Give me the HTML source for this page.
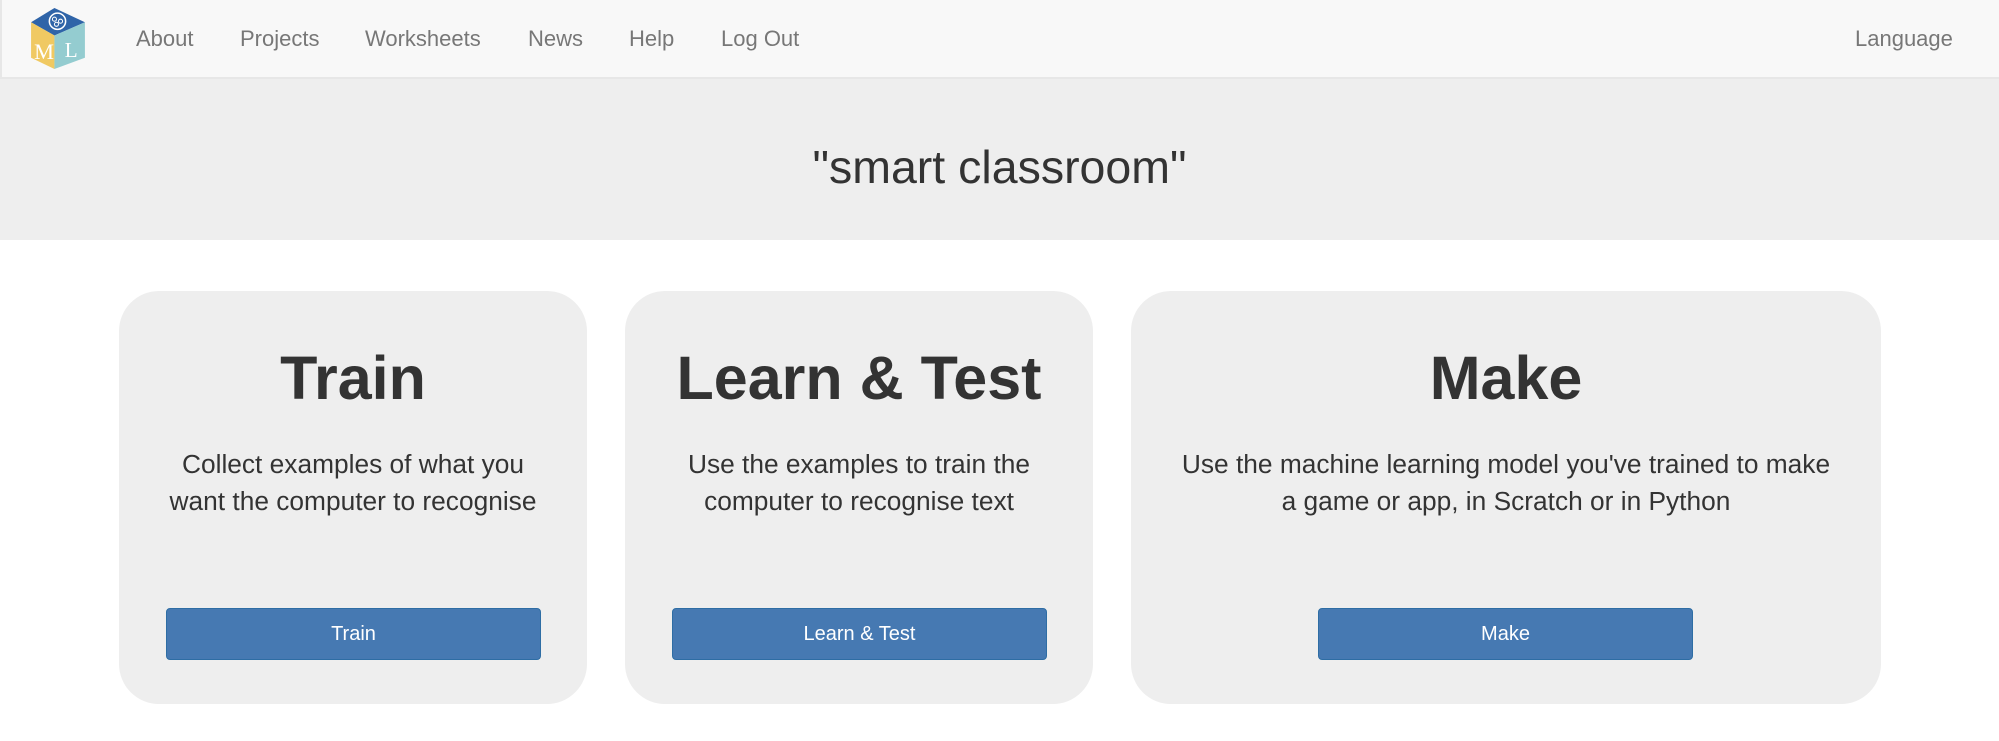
<!DOCTYPE html>
<html><head><meta charset="utf-8"><style>
*{margin:0;padding:0;box-sizing:border-box}
body{width:1999px;height:741px;background:#fff;font-family:"Liberation Sans",Arial,sans-serif;position:relative;overflow:hidden;color:#333}
.nav{position:absolute;left:0;top:0;width:1999px;height:79px;background:#f8f8f8;border-bottom:2px solid #e7e7e7;border-left:2px solid #e7e7e7}
.nav a{position:absolute;top:26px;font-size:22px;color:#777;text-decoration:none;line-height:26px}
.band{position:absolute;left:0;top:79px;width:1999px;height:161px;background:#eee}
.band h1{position:absolute;left:0;width:100%;top:60px;text-align:center;font-weight:normal;font-size:46.5px;line-height:56px}
.card{position:absolute;top:291px;height:413px;background:#eee;border-radius:40px;text-align:center}
.card h2{position:absolute;left:0;width:100%;top:52px;font-size:61px;font-weight:bold;line-height:70px}
.card p{position:absolute;left:0;width:100%;top:155px;font-size:26.3px;line-height:37px}
.btn{position:absolute;top:317px;height:52px;width:375px;background:#4679b2;border:1px solid #2e6da4;border-radius:4px;color:#fff;font-size:20px;line-height:50px}
</style></head><body>
<div class="nav">
<svg style="position:absolute;left:28px;top:7px" width="57" height="63" viewBox="30 8 54 62">
<polygon points="53,9 83,23 53,36 30,23" fill="#2f64a8"/>
<polygon points="30,23 53,36 53,69 30,58" fill="#f0c962"/>
<polygon points="53,36 83,23 83,58 53,69" fill="#94ccd0"/>
<circle cx="56" cy="22" r="8" fill="none" stroke="#fff" stroke-width="1.5"/>
<circle cx="53" cy="20" r="2" fill="none" stroke="#fff" stroke-width="1"/>
<circle cx="59" cy="22" r="2" fill="none" stroke="#fff" stroke-width="1"/>
<circle cx="55" cy="25" r="2" fill="none" stroke="#fff" stroke-width="1"/>
<text x="33" y="59" font-family="Liberation Serif" font-size="22" fill="#fff">M</text>
<text x="63" y="57" font-family="Liberation Serif" font-size="21" fill="#fff">L</text>
</svg>
<a style="left:134px">About</a>
<a style="left:238px">Projects</a>
<a style="left:363px">Worksheets</a>
<a style="left:526px">News</a>
<a style="left:627px">Help</a>
<a style="left:719px">Log Out</a>
<a style="left:1853px">Language</a>
</div>
<div class="band"><h1>"smart classroom"</h1></div>
<div class="card" style="left:119px;width:468px"><h2>Train</h2><p>Collect examples of what you<br>want the computer to recognise</p><div class="btn" style="left:47px">Train</div></div>
<div class="card" style="left:625px;width:468px"><h2>Learn &amp; Test</h2><p>Use the examples to train the<br>computer to recognise text</p><div class="btn" style="left:47px">Learn &amp; Test</div></div>
<div class="card" style="left:1131px;width:750px"><h2>Make</h2><p>Use the machine learning model you've trained to make<br>a game or app, in Scratch or in Python</p><div class="btn" style="left:187px">Make</div></div>
</body></html>
